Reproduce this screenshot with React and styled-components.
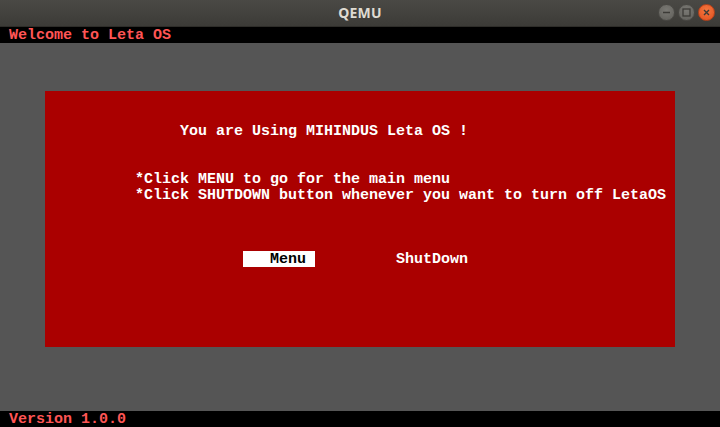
import React from "react";
import styled, { createGlobalStyle } from "styled-components";

const Global = createGlobalStyle`
  html, body { margin: 0; padding: 0; background: #3c3b37; }
  body { width: 720px; height: 427px; overflow: hidden; }
`;

const Window = styled.div`
  width: 720px;
  height: 427px;
  display: flex;
  flex-direction: column;
`;

const TitleBar = styled.div`
  height: 27px;
  flex: none;
  display: flex;
  align-items: center;
  justify-content: center;
  position: relative;
  background: linear-gradient(#4a4945, #3c3b37);
  box-sizing: border-box;
  border-bottom: 1px solid #2e2d29;
`;

const Title = styled.span`
  font-family: "Noto Sans", "DejaVu Sans", sans-serif;
  font-weight: 700;
  font-size: 14px;
  color: #dfdbd2;
  letter-spacing: 0.2px;
  margin-top: -1px;
`;

const Controls = styled.div`
  position: absolute;
  right: 5px;
  top: 4px;
  display: flex;
  gap: 3px;
`;

const CircleBtn = styled.div`
  width: 17px;
  height: 17px;
  border-radius: 50%;
  box-sizing: border-box;
  display: flex;
  align-items: center;
  justify-content: center;
  background: ${(p) =>
    p.$close
      ? "radial-gradient(circle at 50% 35%, #f5773f, #e0501f)"
      : "radial-gradient(circle at 50% 35%, #7a7974, #5f5e59)"};
  border: 1px solid ${(p) => (p.$close ? "#b8421a" : "#4a4945")};
`;

const Screen = styled.div`
  flex: 1;
  display: flex;
  flex-direction: column;
  background: #555555;
  font-family: "Liberation Mono", "DejaVu Sans Mono", monospace;
  font-size: 15px;
  font-weight: 700;
  line-height: 16px;
`;

const StatusRow = styled.div`
  height: 16px;
  flex: none;
  background: #000;
  color: #ff5555;
  padding-left: 9px;
  white-space: pre;
`;

const Desktop = styled.div`
  flex: 1;
  padding: 48px 0 0 45px;
`;

const Panel = styled.div`
  width: 630px;
  height: 256px;
  background: #aa0000;
  display: grid;
  grid-template-columns: repeat(70, 9px);
  grid-template-rows: repeat(16, 16px);
  color: #ffffff;
`;

const Cell = styled.div`
  grid-row: ${(p) => p.$row + 1};
  grid-column: ${(p) => p.$col + 1} / span ${(p) => p.$span || 60};
  white-space: pre;
  background: ${(p) => (p.$selected ? "#ffffff" : "transparent")};
  color: ${(p) => (p.$selected ? "#000000" : "#ffffff")};
`;

const Glyphs = styled.span`
  position: relative;
  top: 1px;
`;

export default function App() {
  return (
    <Window>
      <Global />
      <TitleBar>
        <Title>QEMU</Title>
        <Controls>
          <CircleBtn>
            <svg width="9" height="9" viewBox="0 0 9 9">
              <line x1="1" y1="4.5" x2="8" y2="4.5" stroke="#3c3b37" strokeWidth="1.5" />
            </svg>
          </CircleBtn>
          <CircleBtn>
            <svg width="9" height="9" viewBox="0 0 9 9">
              <rect x="1" y="1" width="7" height="7" fill="none" stroke="#3c3b37" strokeWidth="1.3" />
            </svg>
          </CircleBtn>
          <CircleBtn $close>
            <svg width="9" height="9" viewBox="0 0 9 9">
              <path d="M2 2 L7 7 M7 2 L2 7" stroke="#3c3b37" strokeWidth="1.4" />
            </svg>
          </CircleBtn>
        </Controls>
      </TitleBar>
      <Screen>
        <StatusRow><Glyphs>Welcome to Leta OS</Glyphs></StatusRow>
        <Desktop>
          <Panel>
            <Cell $row={2} $col={15}><Glyphs>You are Using MIHINDUS Leta OS !</Glyphs></Cell>
            <Cell $row={5} $col={10}><Glyphs>*Click MENU to go for the main menu</Glyphs></Cell>
            <Cell $row={6} $col={10}><Glyphs>*Click SHUTDOWN button whenever you want to turn off LetaOS</Glyphs></Cell>
            <Cell $row={10} $col={22} $span={8} $selected><Glyphs>   Menu </Glyphs></Cell>
            <Cell $row={10} $col={39} $span={10}><Glyphs>ShutDown</Glyphs></Cell>
          </Panel>
        </Desktop>
        <StatusRow><Glyphs>Version 1.0.0</Glyphs></StatusRow>
      </Screen>
    </Window>
  );
}
